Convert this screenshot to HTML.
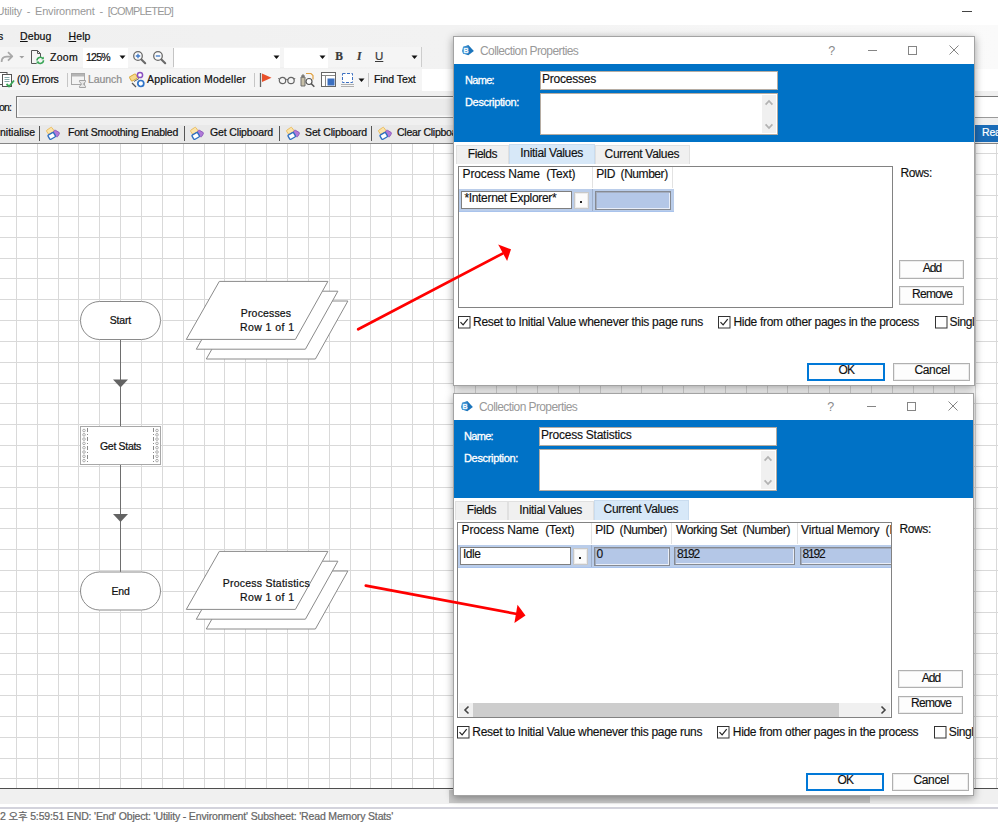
<!DOCTYPE html>
<html lang="en"><head><meta charset="utf-8"><title>Utility - Environment - [COMPLETED]</title>
<style>
html,body{margin:0;padding:0;}
body{width:998px;height:823px;position:relative;overflow:hidden;background:#fff;font-family:"Liberation Sans", "Noto Sans CJK KR", sans-serif;font-size:11px;}
body div,body span.t,.a{position:absolute;}
.t{white-space:pre;line-height:1;}
.t u{text-decoration:underline;text-underline-offset:1px;}
svg{display:block;overflow:visible;}
.dlg{background:#fff;border:1px solid #a3a3a3;box-sizing:border-box;overflow:hidden;box-shadow:0 2px 8px 0 rgba(0,0,0,.38);}
.in{width:998px;height:823px;}
</style></head>
<body>
<div style="left:0px;top:0px;width:998px;height:25px;background:#ffffff;"></div>
<div style="left:0px;top:25px;width:998px;height:118px;background:#f0f0f0;"></div>
<div style="left:0px;top:25px;width:998px;height:66px;background:linear-gradient(90deg,#f0f0f0 0,#f2f2f2 45%,#fafafa 100%);"></div>
<span class="t" id="t1" style="left:0px;top:6px;font-size:11px;color:#999999;letter-spacing:-0.200px;word-spacing:2px;left:auto;right:825px;">Utility - Environment - <span style="letter-spacing:-0.85px">[COMPLETED]</span></span>
<div style="left:962px;top:11px;width:10px;height:1px;background:#444;"></div>
<span class="t" id="t2" style="left:-2px;top:31px;font-size:10.5px;color:#111;-webkit-text-stroke:0.22px #111;">s</span>
<span class="t" id="t3" style="left:20px;top:31px;font-size:10.5px;color:#111;letter-spacing:0.109px;-webkit-text-stroke:0.22px #111;"><u>D</u>ebug</span>
<span class="t" id="t4" style="left:68.5px;top:31px;font-size:10.5px;color:#111;letter-spacing:0.098px;-webkit-text-stroke:0.22px #111;"><u>H</u>elp</span>
<div style="left:0px;top:47px;width:421px;height:20px;background:#f5f5f5;"></div>
<div style="left:421px;top:47px;width:1px;height:20px;background:#cdcdcd;"></div>
<svg class="a" style="left:0;top:49px" width="26" height="16" viewBox="0 0 26 16"><path d="M1.6 13 C1.6 8 4.5 7.4 11.5 7.4 M8 3.2 L12.3 7.4 L8 11.6" fill="none" stroke="#a8a8a8" stroke-width="1.7" stroke-linejoin="round"/><path d="M19.3 7h5l-2.5 2.6z" fill="#a0a0a0"/></svg>
<svg class="a" style="left:30px;top:49px" width="16" height="17" viewBox="0 0 16 17"><path d="M1.5 1.5h6l3 3v4" fill="none" stroke="#555" stroke-width="1"/><path d="M1.5 1.5v13h5" fill="none" stroke="#555" stroke-width="1"/><path d="M7.5 1.5v3h3" fill="none" stroke="#555" stroke-width="1"/><path d="M7 11.5a3.3 3.3 0 0 1 6-1.8M13.5 11.2a3.3 3.3 0 0 1-6 1.8" fill="none" stroke="#3aa657" stroke-width="1.6"/><path d="M13.8 7.6v2.6h-2.6zM6.6 15.2v-2.6h2.6z" fill="#3aa657"/></svg>
<span class="t" id="t5" style="left:50px;top:52px;font-size:10.5px;color:#111;letter-spacing:0.289px;-webkit-text-stroke:0.22px #111;">Zoom</span>
<div style="left:83px;top:48px;width:45px;height:19.5px;background:#ffffff;"></div>
<span class="t" id="t6" style="left:86px;top:52px;font-size:10.5px;color:#111;letter-spacing:-0.715px;-webkit-text-stroke:0.22px #111;">125%</span>
<svg class="a" style="left:119px;top:55px" width="8" height="5"><path d="M0.5 0.5h6l-3 3.5z" fill="#111"/></svg>
<svg class="a" style="left:132px;top:50px" width="16" height="16" viewBox="0 0 16 16"><circle cx="6" cy="6" r="4.3" fill="#fbfbfb" stroke="#6a6a6a" stroke-width="1.3"/><path d="M3.8 6h4.4M6 3.8v4.4" stroke="#3c78c8" stroke-width="1.3" fill="none"/><path d="M9.4 9.4L13.2 13.2" stroke="#6a6a6a" stroke-width="2.1" stroke-linecap="round"/></svg>
<svg class="a" style="left:152px;top:50px" width="16" height="16" viewBox="0 0 16 16"><circle cx="6" cy="6" r="4.3" fill="#fbfbfb" stroke="#6a6a6a" stroke-width="1.3"/><path d="M3.8 6h4.4" stroke="#3c78c8" stroke-width="1.3" fill="none"/><path d="M9.4 9.4L13.2 13.2" stroke="#6a6a6a" stroke-width="2.1" stroke-linecap="round"/></svg>
<div style="left:172.5px;top:48px;width:1px;height:19px;background:#c4c4c4;"></div>
<div style="left:174px;top:48px;width:106px;height:19.5px;background:#ffffff;"></div>
<svg class="a" style="left:273px;top:55px" width="8" height="5"><path d="M0.5 0.5h6l-3 3.5z" fill="#111"/></svg>
<div style="left:284px;top:48px;width:44px;height:19.5px;background:#ffffff;"></div>
<svg class="a" style="left:319px;top:55px" width="8" height="5"><path d="M0.5 0.5h6l-3 3.5z" fill="#111"/></svg>
<span class="t" id="t7" style="left:335.3px;top:51px;font-size:11.5px;color:#3a3a3a;font-weight:bold;font-family:'Liberation Serif', serif;-webkit-text-stroke:0.22px #3a3a3a;">B</span>
<span class="t" id="t8" style="left:357px;top:51px;font-size:11.5px;color:#3a3a3a;font-weight:bold;font-family:'Liberation Serif', serif;-webkit-text-stroke:0.22px #3a3a3a;font-style:italic;">I</span>
<span class="t" id="t9" style="left:375px;top:51px;font-size:11.5px;color:#3a3a3a;-webkit-text-stroke:0.22px #3a3a3a;text-decoration:underline;">U</span>
<svg class="a" style="left:411px;top:55px" width="8" height="5"><path d="M0.5 0.5h6l-3 3.5z" fill="#111"/></svg>
<div style="left:0px;top:69px;width:453px;height:21px;background:#f5f5f5;"></div>
<svg class="a" style="left:0;top:71px" width="16" height="18" viewBox="0 0 16 18"><rect x="-2" y="1.5" width="9" height="12" fill="#fff" stroke="#555"/><rect x="2.5" y="3.5" width="9" height="12" fill="#fff" stroke="#555"/><path d="M4.5 6.5h5M4.5 8.5h5M4.5 10.5h5" stroke="#8aa" stroke-width="1"/><path d="M6.5 13l2.5 2.5L14 9.5" fill="none" stroke="#3aa657" stroke-width="1.8"/></svg>
<span class="t" id="t10" style="left:17px;top:74px;font-size:10.5px;color:#111;letter-spacing:-0.274px;-webkit-text-stroke:0.22px #111;">(0) Errors</span>
<div style="left:67px;top:73px;width:1px;height:14px;background:#c6c6c6;"></div>
<svg class="a" style="left:71px;top:72px" width="16" height="17" viewBox="0 0 16 17"><rect x="0.5" y="1.5" width="13" height="11" fill="#f4f4f4" stroke="#a8a8a8"/><rect x="1" y="2" width="12" height="2.5" fill="#b5b5b5"/><path d="M8.5 8.5h6v1.2l-2 2.3 2 2.3v1.2h-6v-1.2l2-2.3-2-2.3z" fill="#e8e8e8" stroke="#9a9a9a" stroke-width="0.9"/></svg>
<span class="t" id="t11" style="left:88px;top:74px;font-size:10.5px;color:#8e8e8e;letter-spacing:-0.076px;-webkit-text-stroke:0.22px #8e8e8e;">Launch</span>
<svg class="a" style="left:129px;top:71px" width="17" height="18" viewBox="0 0 17 18"><rect x="1" y="4" width="7" height="5" rx="1" transform="rotate(-30 4.5 6.5)" fill="#f7d98a" stroke="#d9a93a" stroke-width="0.9"/><circle cx="11" cy="4" r="2.6" fill="#fff" stroke="#8a4fc0" stroke-width="1.5"/><circle cx="11.8" cy="12.5" r="3" fill="#fff" stroke="#2f74c8" stroke-width="1.7"/><path d="M3 12l4 4" stroke="#555" stroke-width="1.2"/><path d="M5 10.5l5-3" stroke="#666" stroke-width="1"/></svg>
<span class="t" id="t12" style="left:147px;top:74px;font-size:10.5px;color:#111;letter-spacing:0.222px;-webkit-text-stroke:0.22px #111;">Application Modeller</span>
<div style="left:254px;top:73px;width:1px;height:14px;background:#c6c6c6;"></div>
<svg class="a" style="left:257px;top:71px" width="16" height="18" viewBox="0 0 16 18"><path d="M3.5 2v14" stroke="#666" stroke-width="1.3"/><path d="M5 2.5l9.5 4.3L5 11z" fill="#e8502a"/></svg>
<svg class="a" style="left:278px;top:74px" width="18" height="12" viewBox="0 0 18 12"><circle cx="4.5" cy="6.5" r="3.2" fill="none" stroke="#666" stroke-width="1.2"/><circle cx="13" cy="6.5" r="3.2" fill="none" stroke="#666" stroke-width="1.2"/><path d="M7.5 5.8q1.3-1 2.6 0M1.3 5.5L0.5 4M16.2 5.5L17 4" fill="none" stroke="#666" stroke-width="1"/></svg>
<svg class="a" style="left:299px;top:71px" width="17" height="18" viewBox="0 0 17 18"><path d="M2 6h4v9H2zM3 4h2v2H3z" fill="#c8c0a8" stroke="#666" stroke-width="0.9"/><path d="M7 2.5h5l2 2v4" fill="none" stroke="#e0a040" stroke-width="1.2"/><circle cx="10" cy="10.5" r="3" fill="#fff" stroke="#555" stroke-width="1.2"/><path d="M12.3 12.8l3 3" stroke="#555" stroke-width="1.6"/></svg>
<svg class="a" style="left:320px;top:71px" width="17" height="18" viewBox="0 0 17 18"><rect x="1.5" y="1.5" width="14" height="14" fill="#fff" stroke="#666"/><path d="M2 4.5h13M5.5 5v10" stroke="#888" stroke-width="1"/><rect x="7.5" y="7.5" width="7" height="7" fill="#3b6fc0"/></svg>
<svg class="a" style="left:340px;top:71px" width="16" height="18" viewBox="0 0 16 18"><rect x="2.5" y="2.5" width="10" height="9" fill="#fff" stroke="#3b6fc0" stroke-dasharray="3 1.5"/><path d="M1 13.5h13M1 15.5h13" stroke="#b0b0b0" stroke-width="1"/></svg>
<svg class="a" style="left:358px;top:78px" width="8" height="5"><path d="M0.5 0.5h6l-3 3.5z" fill="#111"/></svg>
<div style="left:368px;top:73px;width:1px;height:14px;background:#c6c6c6;"></div>
<span class="t" id="t13" style="left:374px;top:74px;font-size:10.5px;color:#111;letter-spacing:-0.080px;-webkit-text-stroke:0.22px #111;">Find Text</span>
<div style="left:422px;top:69px;width:576px;height:21.5px;background:#ffffff;"></div>
<span class="t" id="t14" style="left:-1px;top:102px;font-size:10.5px;color:#111;letter-spacing:-0.870px;-webkit-text-stroke:0.22px #111;">on:</span>
<div style="left:16px;top:96px;width:990px;height:22px;background:#ebebeb;border:1px solid #7a7a7a;border-bottom-color:#9a9a9a;box-shadow:inset 0 0 0 1.5px #fafafa;box-sizing:border-box;"></div>
<div style="left:960px;top:97px;width:38px;height:20px;background:#ffffff;"></div>
<div style="left:0px;top:125px;width:998px;height:18px;background:#e9e9e9;"></div>
<div style="left:0px;top:143px;width:998px;height:1px;background:#858585;"></div>
<span class="t" id="t15" style="left:0px;top:127px;font-size:10.5px;color:#111;letter-spacing:-0.003px;-webkit-text-stroke:0.22px #111;">nitialise</span>
<div style="left:39px;top:126px;width:1px;height:15px;background:#555;"></div>
<svg class="a" style="left:45px;top:126px" width="16" height="15" viewBox="0 0 16 15"><rect x="2" y="2.5" width="6.5" height="5" rx="1" transform="rotate(-35 5 5)" fill="#fbe3a8" stroke="#e6b85a" stroke-width="0.8"/><rect x="8" y="5" width="6" height="5" rx="1" transform="rotate(30 11 7.5)" fill="#b07ad8" stroke="#8a55b8" stroke-width="0.8"/><rect x="3.5" y="7.5" width="6.5" height="5" rx="1" transform="rotate(-30 6.7 10)" fill="#fff" stroke="#2f6fc0" stroke-width="1.4"/></svg>
<span class="t" id="t16" style="left:68px;top:127px;font-size:10.5px;color:#111;letter-spacing:-0.254px;-webkit-text-stroke:0.22px #111;">Font Smoothing Enabled</span>
<div style="left:184px;top:126px;width:1px;height:15px;background:#555;"></div>
<svg class="a" style="left:189px;top:126px" width="16" height="15" viewBox="0 0 16 15"><rect x="2" y="2.5" width="6.5" height="5" rx="1" transform="rotate(-35 5 5)" fill="#fbe3a8" stroke="#e6b85a" stroke-width="0.8"/><rect x="8" y="5" width="6" height="5" rx="1" transform="rotate(30 11 7.5)" fill="#b07ad8" stroke="#8a55b8" stroke-width="0.8"/><rect x="3.5" y="7.5" width="6.5" height="5" rx="1" transform="rotate(-30 6.7 10)" fill="#fff" stroke="#2f6fc0" stroke-width="1.4"/></svg>
<span class="t" id="t17" style="left:210px;top:127px;font-size:10.5px;color:#111;letter-spacing:-0.138px;-webkit-text-stroke:0.22px #111;">Get Clipboard</span>
<div style="left:279px;top:126px;width:1px;height:15px;background:#555;"></div>
<svg class="a" style="left:285px;top:126px" width="16" height="15" viewBox="0 0 16 15"><rect x="2" y="2.5" width="6.5" height="5" rx="1" transform="rotate(-35 5 5)" fill="#fbe3a8" stroke="#e6b85a" stroke-width="0.8"/><rect x="8" y="5" width="6" height="5" rx="1" transform="rotate(30 11 7.5)" fill="#b07ad8" stroke="#8a55b8" stroke-width="0.8"/><rect x="3.5" y="7.5" width="6.5" height="5" rx="1" transform="rotate(-30 6.7 10)" fill="#fff" stroke="#2f6fc0" stroke-width="1.4"/></svg>
<span class="t" id="t18" style="left:305px;top:127px;font-size:10.5px;color:#111;letter-spacing:-0.125px;-webkit-text-stroke:0.22px #111;">Set Clipboard</span>
<div style="left:371px;top:126px;width:1px;height:15px;background:#555;"></div>
<svg class="a" style="left:377px;top:126px" width="16" height="15" viewBox="0 0 16 15"><rect x="2" y="2.5" width="6.5" height="5" rx="1" transform="rotate(-35 5 5)" fill="#fbe3a8" stroke="#e6b85a" stroke-width="0.8"/><rect x="8" y="5" width="6" height="5" rx="1" transform="rotate(30 11 7.5)" fill="#b07ad8" stroke="#8a55b8" stroke-width="0.8"/><rect x="3.5" y="7.5" width="6.5" height="5" rx="1" transform="rotate(-30 6.7 10)" fill="#fff" stroke="#2f6fc0" stroke-width="1.4"/></svg>
<span class="t" id="t19" style="left:397px;top:127px;font-size:10.5px;color:#111;letter-spacing:-0.264px;-webkit-text-stroke:0.22px #111;">Clear Clipboard</span>
<div style="left:974px;top:125px;width:30px;height:17px;background:#1a6cb8;"></div>
<span class="t" id="t20" style="left:982px;top:127px;font-size:10.5px;color:#ffffff;letter-spacing:-0.165px;-webkit-text-stroke:0.22px #ffffff;">Read Memory Stats</span>
<div style="left:0px;top:144px;width:998px;height:644px;background:#ffffff;"></div>
<svg class="a" style="left:0;top:144px" width="998" height="644" viewBox="0 144 998 644"><g transform="translate(0 144)"><path d="M16.5 0V644M37.5 0V644M58.5 0V644M78.5 0V644M99.5 0V644M120.5 0V644M141.5 0V644M162.5 0V644M183.5 0V644M204.5 0V644M224.5 0V644M245.5 0V644M266.5 0V644M287.5 0V644M308.5 0V644M329.5 0V644M350.5 0V644M370.5 0V644M391.5 0V644M412.5 0V644M433.5 0V644M454.5 0V644M475.5 0V644M496.5 0V644M516.5 0V644M537.5 0V644M558.5 0V644M579.5 0V644M600.5 0V644M621.5 0V644M641.5 0V644M662.5 0V644M683.5 0V644M704.5 0V644M725.5 0V644M746.5 0V644M767.5 0V644M787.5 0V644M808.5 0V644M829.5 0V644M850.5 0V644M871.5 0V644M892.5 0V644M913.5 0V644M933.5 0V644M954.5 0V644M975.5 0V644M996.5 0V644M0 9.5H998M0 30.5H998M0 51.5H998M0 72.5H998M0 93.5H998M0 114.5H998M0 134.5H998M0 155.5H998M0 176.5H998M0 197.5H998M0 218.5H998M0 239.5H998M0 259.5H998M0 280.5H998M0 301.5H998M0 322.5H998M0 343.5H998M0 364.5H998M0 384.5H998M0 405.5H998M0 426.5H998M0 447.5H998M0 468.5H998M0 489.5H998M0 509.5H998M0 530.5H998M0 551.5H998M0 572.5H998M0 593.5H998M0 614.5H998M0 634.5H998" stroke="#d9d9d9" stroke-width="1" fill="none" shape-rendering="crispEdges"/></g><path d="M120.5 339.5V426M120.5 464.5V572" stroke="#6e6e6e" stroke-width="1" fill="none"/><path d="M113 379.5h15l-7.5 8z M113 514h15l-7.5 8z" fill="#636363"/><rect x="80.5" y="301.5" width="80" height="38" rx="19" fill="#fff" stroke="#8a8a8a"/><rect x="80.5" y="572" width="80" height="38" rx="19" fill="#fff" stroke="#8a8a8a"/><rect x="80.5" y="426.5" width="80" height="38" fill="#fff" stroke="#a8a8a8"/><path d="M87.5 428V463M153.5 428V463" stroke="#8a8a8a" stroke-width="1" stroke-dasharray="4 2 1 2" fill="none"/><g fill="#fff" stroke="#9a9a9a" stroke-width="0.8"><circle cx="84" cy="430.5" r="1.3"/><circle cx="157" cy="430.5" r="1.3"/><circle cx="84" cy="434.8" r="1.3"/><circle cx="157" cy="434.8" r="1.3"/><circle cx="84" cy="439.1" r="1.3"/><circle cx="157" cy="439.1" r="1.3"/><circle cx="84" cy="443.4" r="1.3"/><circle cx="157" cy="443.4" r="1.3"/><circle cx="84" cy="447.7" r="1.3"/><circle cx="157" cy="447.7" r="1.3"/><circle cx="84" cy="452.0" r="1.3"/><circle cx="157" cy="452.0" r="1.3"/><circle cx="84" cy="456.3" r="1.3"/><circle cx="157" cy="456.3" r="1.3"/><circle cx="84" cy="460.6" r="1.3"/><circle cx="157" cy="460.6" r="1.3"/></g><polygon points="239.3,301.0 347.9,301.0 315.4,359.0 206.3,359.0" fill="#fff" stroke="#8a8a8a" stroke-width="1"/><polygon points="229.3,291.2 337.9,291.2 305.4,349.2 196.3,349.2" fill="#fff" stroke="#8a8a8a" stroke-width="1"/><polygon points="219.3,281.4 327.9,281.4 295.4,339.4 186.3,339.4" fill="#fff" stroke="#8a8a8a" stroke-width="1"/><polygon points="239.3,571.0 347.9,571.0 315.4,629.0 206.3,629.0" fill="#fff" stroke="#8a8a8a" stroke-width="1"/><polygon points="229.3,561.2 337.9,561.2 305.4,619.2 196.3,619.2" fill="#fff" stroke="#8a8a8a" stroke-width="1"/><polygon points="219.3,551.4 327.9,551.4 295.4,609.4 186.3,609.4" fill="#fff" stroke="#8a8a8a" stroke-width="1"/></svg>
<span class="t" id="t21" style="left:109.7px;top:315px;font-size:10.5px;color:#111;letter-spacing:-0.178px;-webkit-text-stroke:0.22px #111;">Start</span>
<span class="t" id="t22" style="left:100px;top:441px;font-size:10.5px;color:#111;letter-spacing:-0.309px;-webkit-text-stroke:0.22px #111;">Get Stats</span>
<span class="t" id="t23" style="left:111.5px;top:586px;font-size:10.5px;color:#111;letter-spacing:-0.229px;-webkit-text-stroke:0.22px #111;">End</span>
<span class="t" id="t24" style="left:240.8px;top:308px;font-size:10.5px;color:#111;letter-spacing:0.163px;-webkit-text-stroke:0.22px #111;">Processes</span>
<span class="t" id="t25" style="left:239.9px;top:322px;font-size:10.5px;color:#111;letter-spacing:0.440px;-webkit-text-stroke:0.22px #111;">Row 1 of 1</span>
<span class="t" id="t26" style="left:222.7px;top:578px;font-size:10.5px;color:#111;letter-spacing:0.241px;-webkit-text-stroke:0.22px #111;">Process Statistics</span>
<span class="t" id="t27" style="left:239.9px;top:592px;font-size:10.5px;color:#111;letter-spacing:0.440px;-webkit-text-stroke:0.22px #111;">Row 1 of 1</span>
<div style="left:0px;top:788px;width:998px;height:1px;background:#4d4d4d;"></div>
<div style="left:0px;top:789px;width:998px;height:15px;background:#f0f0f0;"></div>
<div style="left:449px;top:790px;width:421px;height:13px;background:#c9c9c9;"></div>
<div style="left:0px;top:804px;width:998px;height:19px;background:#ffffff;"></div>
<div style="left:0px;top:807px;width:998px;height:2px;background:#d3d3dc;"></div>
<span class="t" id="t28" style="left:0px;top:811px;font-size:10.5px;color:#666;letter-spacing:-0.160px;-webkit-text-stroke:0.22px #666;">2 오후 5:59:51 END: 'End' Object: 'Utility - Environment' Subsheet: 'Read Memory Stats'</span>
<div class="dlg" style="left:453px;top:36px;width:522px;height:350px"><div class="in" style="left:-454px;top:-37px">
<svg class="a" style="left:461px;top:44px" width="14" height="12" viewBox="0 0 14 12"><path d="M7.3 0.9L12.9 7 7.3 11.2 2 9.5 1.2 7 2 3z" fill="#1b75bc"/><rect x="2" y="2.6" width="5.5" height="7.4" rx="0.8" fill="#4f9bd6"/><text x="2.5" y="9" font-size="7.2" font-weight="bold" fill="#fff" font-family="Liberation Sans, sans-serif">B</text></svg>
<span class="t" id="t29" style="left:480px;top:45px;font-size:12px;color:#999999;letter-spacing:-0.596px;">Collection Properties</span>
<span class="t" id="t30" style="left:828.3px;top:45px;font-size:12.5px;color:#8a8a8a;">?</span>
<div style="left:868px;top:50px;width:9.3px;height:1px;background:#858585;"></div>
<div style="left:908px;top:45.5px;width:9px;height:9px;border:1px solid #858585;box-sizing:border-box;"></div>
<svg class="a" style="left:948.5px;top:45.3px" width="11" height="11"><path d="M0.5 0.5l9 9M9.5 0.5l-9 9" stroke="#858585" stroke-width="1"/></svg>
<div style="left:453px;top:64px;width:522px;height:78px;background:#0072c6;"></div>
<span class="t" id="t31" style="left:465px;top:75px;font-size:11px;color:#fff;letter-spacing:-0.681px;-webkit-text-stroke:0.3px #fff;">Name:</span>
<span class="t" id="t32" style="left:465px;top:97px;font-size:11px;color:#fff;letter-spacing:-0.340px;-webkit-text-stroke:0.3px #fff;">Description:</span>
<div style="left:540px;top:71px;width:238px;height:19px;background:#fff;border:1px solid #b5aca2;box-sizing:border-box;"></div>
<span class="t" id="t33" style="left:542px;top:73px;font-size:12px;color:#111;letter-spacing:-0.226px;-webkit-text-stroke:0.15px #111;">Processes</span>
<div style="left:540px;top:93px;width:238px;height:42.3px;background:#fff;border:1px solid #b5aca2;box-sizing:border-box;"></div>
<div style="left:762px;top:95px;width:14px;height:38px;background:#f0f0f0;"></div>
<svg class="a" style="left:762px;top:95px" width="14" height="38"><path d="M3.6 9.6l3.4-3.6 3.4 3.6M3.6 29.4l3.4 3.6 3.4-3.6" fill="none" stroke="#b2b2b2" stroke-width="1.7"/></svg>
<div style="left:456px;top:144.9px;width:53px;height:19.1px;background:#f0f0f0;border:1px solid #e0e0e0;border-bottom:none;box-sizing:border-box;"></div>
<span class="t" id="t34" style="left:467.8px;top:148px;font-size:12px;color:#111;letter-spacing:-0.453px;-webkit-text-stroke:0.15px #111;">Fields</span>
<div style="left:509px;top:143.7px;width:85.5px;height:20.3px;background:#d7e8f8;border:1px solid #c9dcef;border-bottom:none;box-sizing:border-box;"></div>
<span class="t" id="t35" style="left:520.3px;top:147px;font-size:12px;color:#111;letter-spacing:-0.318px;-webkit-text-stroke:0.15px #111;">Initial Values</span>
<div style="left:594.5px;top:144.9px;width:95.0px;height:19.1px;background:#f0f0f0;border:1px solid #e0e0e0;border-bottom:none;box-sizing:border-box;"></div>
<span class="t" id="t36" style="left:604.6px;top:148px;font-size:12px;color:#111;letter-spacing:-0.325px;-webkit-text-stroke:0.15px #111;">Current Values</span>
<div style="left:458px;top:166px;width:435px;height:141.5px;background:#fff;border:1px solid #828282;box-sizing:border-box;"></div>
<span class="t" id="t37" style="left:462.5px;top:168px;font-size:12px;color:#111;letter-spacing:-0.118px;-webkit-text-stroke:0.15px #111;">Process Name  (Text)</span>
<span class="t" id="t38" style="left:596.2px;top:168px;font-size:12px;color:#111;letter-spacing:-0.450px;-webkit-text-stroke:0.15px #111;">PID  (Number)</span>
<div style="left:592px;top:167px;width:1px;height:21px;background:#e2e2e2;"></div>
<div style="left:672px;top:167px;width:1px;height:21px;background:#e2e2e2;"></div>
<div style="left:459px;top:189px;width:215px;height:23px;background:#bacdea;border-bottom:1px solid #a9c3ec;box-sizing:border-box;"></div>
<div style="left:461px;top:191px;width:111px;height:18px;background:#fff;border:1px solid #7f7f7f;box-sizing:border-box;"></div>
<div style="left:574px;top:191.5px;width:15.3px;height:17px;background:#fbfbfb;border:1px solid #c8c8c8;box-shadow:inset 0 0 0 1px #ececec;box-sizing:border-box;"></div>
<div style="left:580.3px;top:201.4px;width:1.5px;height:1.5px;background:#222;"></div>
<div style="left:592px;top:189px;width:1px;height:22px;background:rgba(110,120,140,.35);"></div>
<div style="left:594.5px;top:191px;width:76.5px;height:18.5px;background:#b4c7e7;border:1px solid #868a92;box-shadow:inset 1px 1px 0 #a3adc0,inset -1px -1px 0 #e9eef8;box-sizing:border-box;"></div>
<span class="t" id="t39" style="left:464.4px;top:192px;font-size:12px;color:#111;letter-spacing:-0.324px;-webkit-text-stroke:0.15px #111;">*Internet Explorer*</span>
<span class="t" id="t40" style="left:900.4px;top:167px;font-size:12px;color:#111;letter-spacing:-0.349px;-webkit-text-stroke:0.15px #111;">Rows:</span>
<div style="left:899px;top:260px;width:65px;height:18.5px;background:#fdfdfd;border:1px solid #b0b0b0;box-shadow:inset 0 0 0 1px #ececec;box-sizing:border-box;"></div>
<span class="t" id="t41" style="left:922.8px;top:262px;font-size:12px;color:#111;letter-spacing:-0.986px;-webkit-text-stroke:0.15px #111;">Add</span>
<div style="left:899px;top:286px;width:65px;height:18.5px;background:#fdfdfd;border:1px solid #b0b0b0;box-shadow:inset 0 0 0 1px #ececec;box-sizing:border-box;"></div>
<span class="t" id="t42" style="left:912px;top:288px;font-size:12px;color:#111;letter-spacing:-0.731px;-webkit-text-stroke:0.15px #111;">Remove</span>
<svg class="a" style="left:458px;top:316px" width="13" height="13"><rect x="0.5" y="0.5" width="11.5" height="11.5" fill="#fff" stroke="#333"/><path d="M2.5 6.2l2.6 2.6 4.6-5.6" fill="none" stroke="#222" stroke-width="1.2"/></svg>
<svg class="a" style="left:717.8px;top:316px" width="13" height="13"><rect x="0.5" y="0.5" width="11.5" height="11.5" fill="#fff" stroke="#333"/><path d="M2.5 6.2l2.6 2.6 4.6-5.6" fill="none" stroke="#222" stroke-width="1.2"/></svg>
<svg class="a" style="left:935px;top:316px" width="13" height="13"><rect x="0.5" y="0.5" width="11.5" height="11.5" fill="#fff" stroke="#333"/></svg>
<span class="t" id="t43" style="left:473px;top:316px;font-size:12px;color:#111;letter-spacing:-0.291px;-webkit-text-stroke:0.15px #111;">Reset to Initial Value whenever this page runs</span>
<span class="t" id="t44" style="left:733.5px;top:316px;font-size:12px;color:#111;letter-spacing:-0.313px;-webkit-text-stroke:0.15px #111;">Hide from other pages in the process</span>
<span class="t" id="t45" style="left:949.5px;top:316px;font-size:12px;color:#111;letter-spacing:-0.370px;-webkit-text-stroke:0.15px #111;">Single Row</span>
<div style="left:807px;top:363px;width:77.5px;height:18px;background:#fdfdfd;border:2px solid #0078d7;box-sizing:border-box;"></div>
<span class="t" id="t46" style="left:838.4px;top:364px;font-size:12px;color:#111;letter-spacing:-0.722px;-webkit-text-stroke:0.15px #111;">OK</span>
<div style="left:892.7px;top:363px;width:77.5px;height:18px;background:#fdfdfd;border:1px solid #b0b0b0;box-shadow:inset 0 0 0 1px #ececec;box-sizing:border-box;"></div>
<span class="t" id="t47" style="left:914.4px;top:364px;font-size:12px;color:#111;letter-spacing:-0.327px;-webkit-text-stroke:0.15px #111;">Cancel</span>
</div></div>
<div class="dlg" style="left:453px;top:393px;width:521px;height:403px"><div class="in" style="left:-455px;top:-394px">
<svg class="a" style="left:461px;top:400px" width="14" height="12" viewBox="0 0 14 12"><path d="M7.3 0.9L12.9 7 7.3 11.2 2 9.5 1.2 7 2 3z" fill="#1b75bc"/><rect x="2" y="2.6" width="5.5" height="7.4" rx="0.8" fill="#4f9bd6"/><text x="2.5" y="9" font-size="7.2" font-weight="bold" fill="#fff" font-family="Liberation Sans, sans-serif">B</text></svg>
<span class="t" id="t48" style="left:480px;top:401px;font-size:12px;color:#999999;letter-spacing:-0.596px;">Collection Properties</span>
<span class="t" id="t49" style="left:828.3px;top:401px;font-size:12.5px;color:#8a8a8a;">?</span>
<div style="left:868px;top:406px;width:9.3px;height:1px;background:#858585;"></div>
<div style="left:908px;top:401.5px;width:9px;height:9px;border:1px solid #858585;box-sizing:border-box;"></div>
<svg class="a" style="left:948.5px;top:401.3px" width="11" height="11"><path d="M0.5 0.5l9 9M9.5 0.5l-9 9" stroke="#858585" stroke-width="1"/></svg>
<div style="left:453px;top:420px;width:521px;height:78px;background:#0072c6;"></div>
<span class="t" id="t50" style="left:465px;top:431px;font-size:11px;color:#fff;letter-spacing:-0.681px;-webkit-text-stroke:0.3px #fff;">Name:</span>
<span class="t" id="t51" style="left:465px;top:453px;font-size:11px;color:#fff;letter-spacing:-0.340px;-webkit-text-stroke:0.3px #fff;">Description:</span>
<div style="left:540px;top:427px;width:238px;height:19px;background:#fff;border:1px solid #b5aca2;box-sizing:border-box;"></div>
<span class="t" id="t52" style="left:542px;top:429px;font-size:12px;color:#111;letter-spacing:-0.234px;-webkit-text-stroke:0.15px #111;">Process Statistics</span>
<div style="left:540px;top:449px;width:238px;height:42.3px;background:#fff;border:1px solid #b5aca2;box-sizing:border-box;"></div>
<div style="left:762px;top:451px;width:14px;height:38px;background:#f0f0f0;"></div>
<svg class="a" style="left:762px;top:451px" width="14" height="38"><path d="M3.6 9.6l3.4-3.6 3.4 3.6M3.6 29.4l3.4 3.6 3.4-3.6" fill="none" stroke="#b2b2b2" stroke-width="1.7"/></svg>
<div style="left:456px;top:500.9px;width:53px;height:19.1px;background:#f0f0f0;border:1px solid #e0e0e0;border-bottom:none;box-sizing:border-box;"></div>
<span class="t" id="t53" style="left:467.8px;top:504px;font-size:12px;color:#111;letter-spacing:-0.453px;-webkit-text-stroke:0.15px #111;">Fields</span>
<div style="left:509px;top:500.9px;width:85.5px;height:19.1px;background:#f0f0f0;border:1px solid #e0e0e0;border-bottom:none;box-sizing:border-box;"></div>
<span class="t" id="t54" style="left:520.3px;top:504px;font-size:12px;color:#111;letter-spacing:-0.318px;-webkit-text-stroke:0.15px #111;">Initial Values</span>
<div style="left:594.5px;top:499.7px;width:95.0px;height:20.3px;background:#d7e8f8;border:1px solid #c9dcef;border-bottom:none;box-sizing:border-box;"></div>
<span class="t" id="t55" style="left:604.6px;top:503px;font-size:12px;color:#111;letter-spacing:-0.325px;-webkit-text-stroke:0.15px #111;">Current Values</span>
<div style="left:458px;top:522px;width:435px;height:195.5px;background:#fff;border:1px solid #828282;box-sizing:border-box;"></div>
<span class="t" id="t56" style="left:462.5px;top:524px;font-size:12px;color:#111;letter-spacing:-0.118px;-webkit-text-stroke:0.15px #111;">Process Name  (Text)</span>
<span class="t" id="t57" style="left:596.2px;top:524px;font-size:12px;color:#111;letter-spacing:-0.450px;-webkit-text-stroke:0.15px #111;">PID  (Number)</span>
<div style="left:592px;top:523px;width:1px;height:21px;background:#e2e2e2;"></div>
<div style="left:672px;top:523px;width:1px;height:21px;background:#e2e2e2;"></div>
<div style="left:459px;top:545px;width:433px;height:23px;background:#bacdea;border-bottom:1px solid #a9c3ec;box-sizing:border-box;"></div>
<div style="left:461px;top:547px;width:111px;height:18px;background:#fff;border:1px solid #7f7f7f;box-sizing:border-box;"></div>
<div style="left:574px;top:547.5px;width:15.3px;height:17px;background:#fbfbfb;border:1px solid #c8c8c8;box-shadow:inset 0 0 0 1px #ececec;box-sizing:border-box;"></div>
<div style="left:580.3px;top:557.4px;width:1.5px;height:1.5px;background:#222;"></div>
<div style="left:592px;top:545px;width:1px;height:22px;background:rgba(110,120,140,.35);"></div>
<div style="left:594.5px;top:547px;width:76.5px;height:18.5px;background:#b4c7e7;border:1px solid #868a92;box-shadow:inset 1px 1px 0 #a3adc0,inset -1px -1px 0 #e9eef8;box-sizing:border-box;"></div>
<span class="t" id="t58" style="left:464px;top:548px;font-size:12px;color:#111;letter-spacing:-0.465px;-webkit-text-stroke:0.15px #111;">Idle</span>
<span class="t" id="t59" style="left:597.5px;top:548px;font-size:12px;color:#111;-webkit-text-stroke:0.15px #111;">0</span>
<span class="t" id="t60" style="left:677px;top:524px;font-size:12px;color:#111;letter-spacing:-0.404px;-webkit-text-stroke:0.15px #111;">Working Set  (Number)</span>
<div style="left:797.5px;top:523px;width:1px;height:21px;background:#e2e2e2;"></div>
<div style="left:675px;top:547px;width:120.5px;height:18px;background:#b4c7e7;border:1px solid #868a92;box-shadow:inset 1px 1px 0 #a3adc0,inset -1px -1px 0 #e9eef8;box-sizing:border-box;"></div>
<span class="t" id="t61" style="left:678px;top:548px;font-size:12px;color:#111;letter-spacing:-1.176px;-webkit-text-stroke:0.15px #111;">8192</span>
<div class="a" style="left:799px;top:523px;width:93px;height:44px;overflow:hidden"><div class="in" style="left:-799px;top:-523px">
<span class="t" id="t62" style="left:802px;top:524px;font-size:12px;color:#111;letter-spacing:-0.159px;-webkit-text-stroke:0.15px #111;">Virtual Memory  (Number)</span>
<div style="left:800.5px;top:547px;width:120px;height:18px;background:#b4c7e7;border:1px solid #868a92;box-shadow:inset 1px 1px 0 #a3adc0,inset -1px -1px 0 #e9eef8;box-sizing:border-box;"></div>
<span class="t" id="t63" style="left:803.5px;top:548px;font-size:12px;color:#111;letter-spacing:-1.176px;-webkit-text-stroke:0.15px #111;">8192</span>
</div></div>
<div style="left:460px;top:703px;width:431px;height:14px;background:#f0f0f0;"></div>
<div style="left:474px;top:703px;width:365.5px;height:14px;background:#cdcdcd;"></div>
<svg class="a" style="left:460px;top:703px" width="432" height="14"><path d="M9.5 3.5L6 7l3.5 3.5M422.5 3.5L426 7l-3.5 3.5" fill="none" stroke="#444" stroke-width="1.6"/></svg>
<span class="t" id="t64" style="left:900.4px;top:523px;font-size:12px;color:#111;letter-spacing:-0.349px;-webkit-text-stroke:0.15px #111;">Rows:</span>
<div style="left:899px;top:670px;width:65px;height:18.0px;background:#fdfdfd;border:1px solid #b0b0b0;box-shadow:inset 0 0 0 1px #ececec;box-sizing:border-box;"></div>
<span class="t" id="t65" style="left:922.8px;top:672px;font-size:12px;color:#111;letter-spacing:-0.986px;-webkit-text-stroke:0.15px #111;">Add</span>
<div style="left:899px;top:695.5px;width:65px;height:18.0px;background:#fdfdfd;border:1px solid #b0b0b0;box-shadow:inset 0 0 0 1px #ececec;box-sizing:border-box;"></div>
<span class="t" id="t66" style="left:912px;top:697px;font-size:12px;color:#111;letter-spacing:-0.731px;-webkit-text-stroke:0.15px #111;">Remove</span>
<svg class="a" style="left:458px;top:726px" width="13" height="13"><rect x="0.5" y="0.5" width="11.5" height="11.5" fill="#fff" stroke="#333"/><path d="M2.5 6.2l2.6 2.6 4.6-5.6" fill="none" stroke="#222" stroke-width="1.2"/></svg>
<svg class="a" style="left:717.8px;top:726px" width="13" height="13"><rect x="0.5" y="0.5" width="11.5" height="11.5" fill="#fff" stroke="#333"/><path d="M2.5 6.2l2.6 2.6 4.6-5.6" fill="none" stroke="#222" stroke-width="1.2"/></svg>
<svg class="a" style="left:935px;top:726px" width="13" height="13"><rect x="0.5" y="0.5" width="11.5" height="11.5" fill="#fff" stroke="#333"/></svg>
<span class="t" id="t67" style="left:473.3px;top:726px;font-size:12px;color:#111;letter-spacing:-0.291px;-webkit-text-stroke:0.15px #111;">Reset to Initial Value whenever this page runs</span>
<span class="t" id="t68" style="left:733.8px;top:726px;font-size:12px;color:#111;letter-spacing:-0.313px;-webkit-text-stroke:0.15px #111;">Hide from other pages in the process</span>
<span class="t" id="t69" style="left:949.8px;top:726px;font-size:12px;color:#111;letter-spacing:-0.370px;-webkit-text-stroke:0.15px #111;">Single Row</span>
<div style="left:807px;top:773px;width:77.5px;height:18px;background:#fdfdfd;border:2px solid #0078d7;box-sizing:border-box;"></div>
<span class="t" id="t70" style="left:838.4px;top:774px;font-size:12px;color:#111;letter-spacing:-0.722px;-webkit-text-stroke:0.15px #111;">OK</span>
<div style="left:892.7px;top:773px;width:77.5px;height:18px;background:#fdfdfd;border:1px solid #b0b0b0;box-shadow:inset 0 0 0 1px #ececec;box-sizing:border-box;"></div>
<span class="t" id="t71" style="left:914.4px;top:774px;font-size:12px;color:#111;letter-spacing:-0.327px;-webkit-text-stroke:0.15px #111;">Cancel</span>
</div></div>
<svg class="a" style="left:0;top:0" width="998" height="823"><g stroke="#ff0000" stroke-width="2.7" fill="none" stroke-linecap="round"><path d="M358.2 329.3L502.5 253.6"/><path d="M365.8 585.7L517 614"/></g><g fill="#ff0000"><polygon points="498.2,244.6 511,249.3 507.1,261"/><polygon points="517.5,604.7 525.5,615.4 514.4,623"/></g></svg>
</body></html>
